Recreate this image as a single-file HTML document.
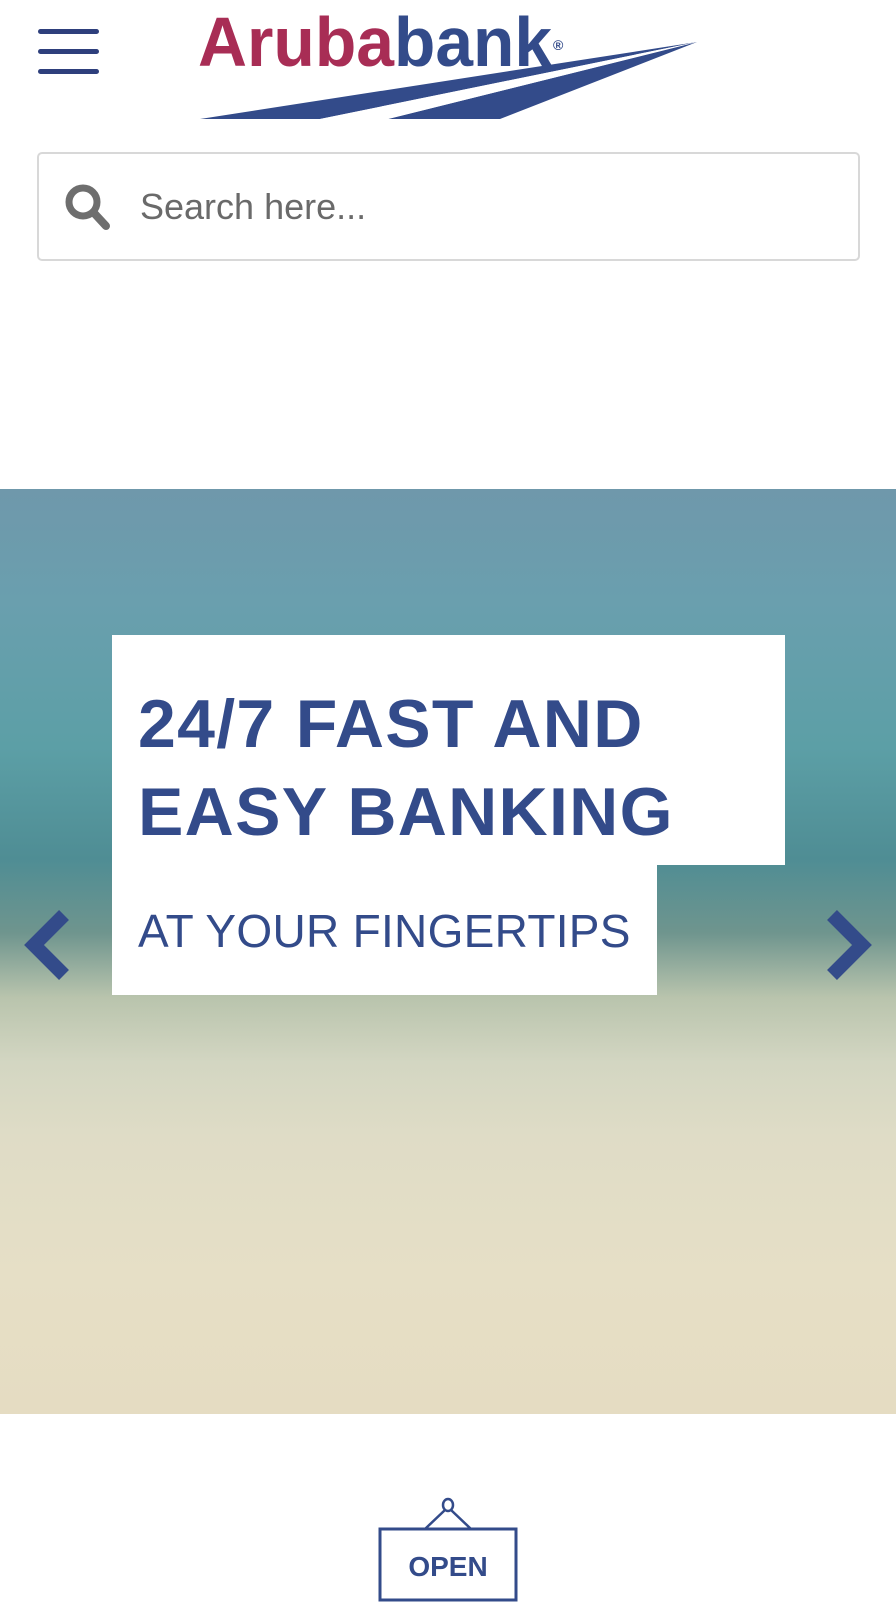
<!DOCTYPE html>
<html><head><meta charset="utf-8"><style>
*{margin:0;padding:0;box-sizing:border-box}
body{width:896px;height:1614px;background:#fff;position:relative;overflow:hidden;font-family:"Liberation Sans",sans-serif}
.bar{position:absolute;left:38px;width:61px;height:5px;background:#2e3f7c;border-radius:3px}
.search{position:absolute;left:37px;top:152px;width:823px;height:109px;border:2px solid #d8d8d8;border-radius:5px}
.search span{position:absolute;left:101px;top:32px;font-size:36px;color:#6a6a6a}
.hero{position:absolute;left:0;top:489px;width:896px;height:925px;
background:linear-gradient(180deg,#6f98ab 0%,#6a9fae 12%,#5c9fa6 28%,#4f8d94 40%,#6f958e 48%,#b9c4ad 55%,#d3d6c2 62%,#dfdcc6 70%,#e6dfc6 85%,#e5dcc2 100%)}
.box1{position:absolute;left:112px;top:635px;width:673px;height:230px;background:#fff}
.box2{position:absolute;left:112px;top:864px;width:545px;height:131px;background:#fff}
.t1{position:absolute;left:138px;top:680px;font-size:68px;font-weight:bold;color:#334b8a;line-height:88px;letter-spacing:1.3px}
.t2{position:absolute;left:138px;top:903px;font-size:46px;color:#334b8a;line-height:56px;letter-spacing:0.3px}
</style></head><body>
<div class="bar" style="top:29px"></div>
<div class="bar" style="top:49px"></div>
<div class="bar" style="top:69px"></div>
<svg style="position:absolute;left:190px;top:0" width="520" height="125">
<path d="M10 119 L507 42 L130 119 Z" fill="#334b8a"/>
<path d="M198 119 L507 42 L310 119 Z" fill="#334b8a"/>
<path d="M130 119 L507 42 L198 119 Z" fill="#fff"/>
<text x="8" y="66" font-family="Liberation Sans,sans-serif" font-weight="bold" font-size="70" fill="#a82d55" textLength="196" lengthAdjust="spacingAndGlyphs">Aruba</text>
<text x="204" y="66" font-family="Liberation Sans,sans-serif" font-weight="bold" font-size="70" fill="#334b8a" textLength="158" lengthAdjust="spacingAndGlyphs">bank</text>
<text x="363" y="50" font-size="14" font-weight="bold" fill="#334b8a">®</text>
</svg>
<div class="search">
<svg style="position:absolute;left:24px;top:28px" width="50" height="50" viewBox="0 0 50 50"><circle cx="20" cy="20" r="14" fill="none" stroke="#6e6e6e" stroke-width="7"/><line x1="31" y1="31" x2="43" y2="44" stroke="#6e6e6e" stroke-width="8" stroke-linecap="round"/></svg>
<span>Search here...</span></div>
<div class="hero"></div>
<div class="box1"></div><div class="box2"></div>
<div class="t1">24/7 FAST AND<br>EASY BANKING</div>
<div class="t2">AT YOUR FINGERTIPS</div>
<svg style="position:absolute;left:14px;top:905px" width="60" height="80"><path d="M50 10 L20 40 L50 70" fill="none" stroke="#334b8a" stroke-width="14"/></svg>
<svg style="position:absolute;left:822px;top:905px" width="60" height="80"><path d="M10 10 L40 40 L10 70" fill="none" stroke="#334b8a" stroke-width="14"/></svg>
<svg style="position:absolute;left:375px;top:1492px" width="146" height="112">
<ellipse cx="73" cy="13" rx="5" ry="6" fill="none" stroke="#334b8a" stroke-width="2.5"/>
<path d="M70 18 L50 37 M76 18 L96 37" stroke="#334b8a" stroke-width="2.5" fill="none"/>
<rect x="5" y="37" width="136" height="71" fill="none" stroke="#334b8a" stroke-width="3"/>
<text x="73" y="84" text-anchor="middle" font-size="28" font-weight="bold" fill="#334b8a">OPEN</text>
</svg>
</body></html>
